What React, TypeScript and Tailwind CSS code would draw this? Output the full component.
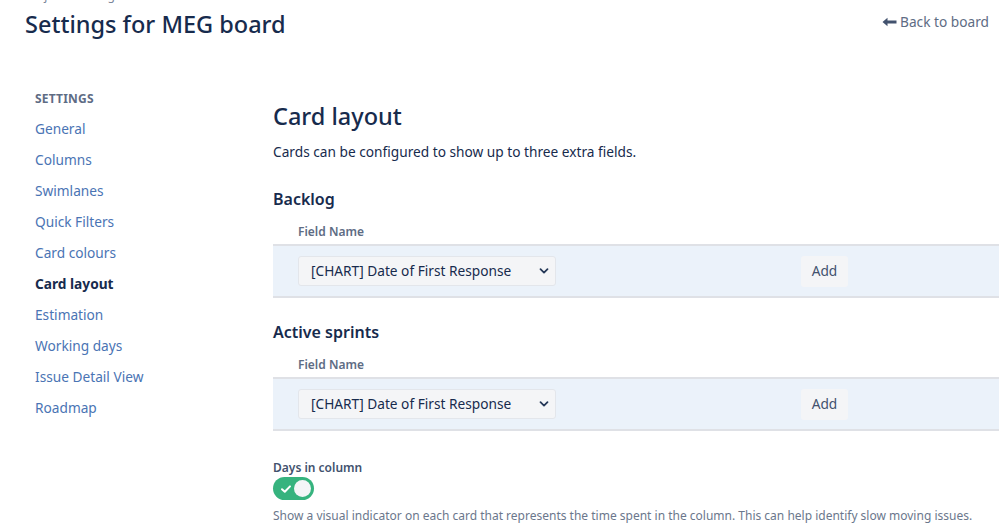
import React from "react";

const nav = [
  "General",
  "Columns",
  "Swimlanes",
  "Quick Filters",
  "Card colours",
  "Card layout",
  "Estimation",
  "Working days",
  "Issue Detail View",
  "Roadmap",
];

function FieldRow({ title }: { title: string }) {
  return (
    <div>
      <div className="text-[16px] font-semibold leading-6 text-[#172b4d]">{title}</div>
      <div className="mt-[13px] pl-[25px] text-[12px] font-semibold leading-4 text-[#5e6c84]">Field Name</div>
      <div className="mt-[4px] flex h-[54px] items-center border-y-2 border-[#dfe1e6] bg-[#ebf2fa] pl-[25px]">
        <div className="flex h-[30px] w-[258px] items-center justify-between rounded-[3px] border border-[#e3e6eb] bg-[#f4f5f7] pl-[12px] pr-[5px]">
          <span className="text-[13.7px] text-[#172b4d]">[CHART] Date of First Response</span>
          <svg width="12" height="12" viewBox="0 0 12 12" fill="none">
            <path d="M2.5 4.2 6 7.6 9.5 4.2" stroke="#253858" strokeWidth="1.8" strokeLinecap="round" strokeLinejoin="round" />
          </svg>
        </div>
        <div className="ml-[245px] flex h-[31px] w-[47px] items-center justify-center rounded-[3px] bg-[#f4f5f7] text-[13.7px] text-[#42526e]">
          Add
        </div>
      </div>
    </div>
  );
}

export default function App() {
  return (
    <div className="h-[532px] w-[999px] overflow-hidden bg-white" style={{ fontFamily: '"Noto Sans", "Open Sans", sans-serif' }}>
      <div className="flex items-start justify-between pl-[25px] pr-[10px]">
        <div>
          <div className="-mt-[12px] text-[12px] leading-4 text-[#7a869a]">Projects / Rising Minds / MEG</div>
          <h1 className="mt-[4px] text-[23.5px] font-medium leading-8 text-[#172b4d]">Settings for MEG board</h1>
        </div>
        <div className="mt-[12px] flex items-center gap-[3px] text-[13.7px] text-[#5e6c84]">
          <svg width="15" height="10" viewBox="0 0 15 10">
            <path d="M0.5 5 5.5 0.8V3.6H14.5V6.6H5.5V9.2Z" fill="#42526e" />
          </svg>
          <span>Back to board</span>
        </div>
      </div>

      <div className="mt-[49px] flex">
        <div className="w-[273px] shrink-0 pl-[35px]">
          <div className="text-[12px] font-bold leading-5 tracking-[0.2px] text-[#5e6c84]">SETTINGS</div>
          <div className="mt-[8px] flex flex-col">
            {nav.map((n) => (
              <div
                key={n}
                className={`h-[31px] text-[13.7px] leading-6 ${
                  n === "Card layout" ? "font-bold text-[#172b4d]" : "text-[#4a74b4]"
                }`}
              >
                {n}
              </div>
            ))}
          </div>
        </div>

        <div className="flex-1 pt-[11px]">
          <h2 className="text-[23.5px] font-medium leading-8 text-[#172b4d]">Card layout</h2>
          <p className="mt-[10px] text-[13.7px] leading-5 text-[#172b4d]">
            Cards can be configured to show up to three extra fields.
          </p>
          <div className="mt-[25px]">
            <FieldRow title="Backlog" />
          </div>
          <div className="mt-[22px]">
            <FieldRow title="Active sprints" />
          </div>
          <div className="mt-[29px]">
            <div className="text-[12px] font-semibold leading-4 text-[#42526e]">Days in column</div>
            <div className="mt-[1px] flex h-[23px] w-[41px] items-center rounded-full bg-[#36b37e] px-[3px]">
              <svg width="14" height="14" viewBox="0 0 14 14" className="ml-[3px]">
                <path d="M3 7.2 5.8 9.8 11 4.4" fill="none" stroke="white" strokeWidth="2" strokeLinecap="round" strokeLinejoin="round" />
              </svg>
              <div className="ml-auto h-[17px] w-[17px] rounded-full bg-[#f4f5f7]" />
            </div>
            <p className="mt-[8px] text-[12px] leading-4 text-[#6b778c]">
              Show a visual indicator on each card that represents the time spent in the column. This can help identify slow moving issues.
            </p>
          </div>
        </div>
      </div>
    </div>
  );
}
